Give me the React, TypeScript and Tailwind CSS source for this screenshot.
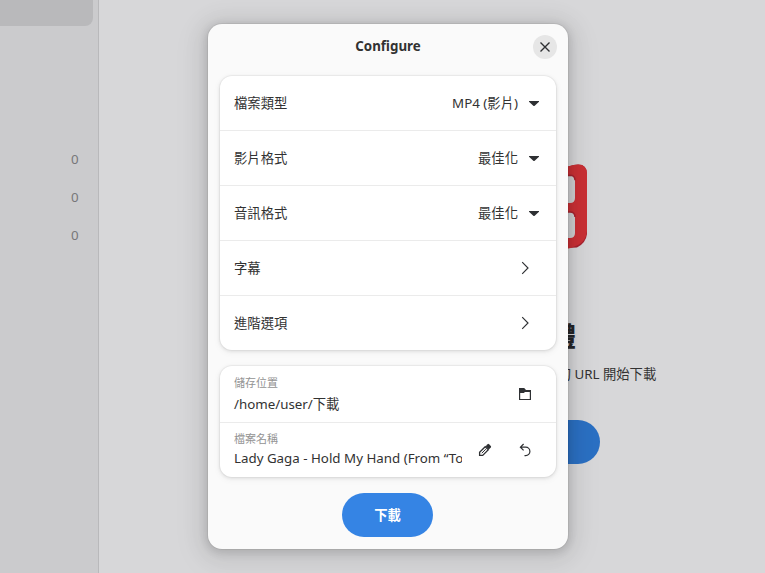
import React from "react";

function Caret() {
  return (
    <svg width="16" height="16" viewBox="0 0 16 16" className="mt-0.5 shrink-0" fill="#2e3033">
      <path d="M3 5h10v.800L8.700 9.700a1 1 0 0 1-1.400 0L3 5.800z" />
    </svg>
  );
}

function Chevron() {
  return (
    <svg width="16" height="16" viewBox="0 0 16 16" className="mr-[9px] shrink-0" fill="none" stroke="#2e3033" strokeWidth="1.150">
      <path d="M5.200 2.200 11 8l-5.800 5.800" />
    </svg>
  );
}

function OptionRow({ label, value }: { label: string; value?: string }) {
  return (
    <div className="flex h-[55px] items-center border-b border-[#ebebeb] px-3.5 last:h-[54px] last:border-b-0">
      <span className="flex-1 pt-0.5">{label}</span>
      {value ? (
        <div className="flex items-center gap-2">
          <span className="pt-0.5">{value}</span>
          <Caret />
        </div>
      ) : (
        <Chevron />
      )}
    </div>
  );
}

function Folder() {
  return (
    <svg width="16" height="16" viewBox="0 0 16 16" fill="#2e3033">
      <path fillRule="evenodd" d="M2 2h5.200l1.800 2h5v10H2V2zm6 4L6.800 7H3.200v5.900h9.600V6H8z" />
    </svg>
  );
}

function Pencil() {
  return (
    <svg width="16" height="16" viewBox="0 0 16 16" fill="none" stroke="#2e3033" strokeWidth="1.300">
      <path d="M2.600 13.400V10.300L8.200 4.700l3.100 3.100-5.600 5.600z" />
      <path d="m4.800 11.200 4-4" strokeWidth="1" />
      <path d="M8.600 4.200 10.600 2.200a1 1 0 0 1 1.400 0L13.800 4a1 1 0 0 1 0 1.400L11.800 7.400z" fill="#2e3033" stroke="none" />
    </svg>
  );
}

function Undo() {
  return (
    <svg width="16" height="16" viewBox="0 0 16 16" fill="none" stroke="#2e3033" strokeWidth="1.200">
      <path d="M6.600 2 3.400 5.200l3.200 3.200M3.500 5.200H8.700a4.200 4.200 0 0 1 0 8.400H7.500" />
    </svg>
  );
}

const card = "rounded-xl bg-white shadow-[0_0_0_1px_rgba(0,0,0,0.03),0_1px_3px_1px_rgba(0,0,0,0.07),0_2px_6px_2px_rgba(0,0,0,0.03)]";

function ConfigureDialog() {
  return (
    <section className="absolute top-6 left-[208px] h-[525px] w-[360px] rounded-[14px] bg-[#fafafa] px-3 shadow-[0_2px_8px_2px_rgba(0,0,0,0.13),0_3px_20px_10px_rgba(0,0,0,0.06),0_6px_32px_16px_rgba(0,0,0,0.025),0_0_0_1px_rgba(0,0,0,0.05)]">
      <header className="-mr-px grid h-[52px] grid-cols-[23px_1fr_24px] pt-[11px]">
        <span />
        <h1 className="text-center font-bold leading-[22px]">Configure</h1>
        <button className="flex size-6 items-center justify-center rounded-full bg-[#e6e6e6]">
          <svg width="16" height="16" viewBox="0 0 16 16" stroke="#2e3033" strokeWidth="1.350">
            <path d="m3.500 3.500 9 9m0-9-9 9" />
          </svg>
        </button>
      </header>
      <div className={card}>
        <OptionRow label="檔案類型" value="MP4 (影片)" />
        <OptionRow label="影片格式" value="最佳化" />
        <OptionRow label="音訊格式" value="最佳化" />
        <OptionRow label="字幕" />
        <OptionRow label="進階選項" />
      </div>
      <div className={`mt-4 ${card}`}>
        <div className="flex h-[57px] items-center border-b border-[#ebebeb] pr-[23px] pl-3.5">
          <div className="flex-1">
            <div className="pt-px text-[11px] leading-[18px] text-[#939393]">儲存位置</div>
            <div className="pt-px leading-[22px]">/home/user/下載</div>
          </div>
          <Folder />
        </div>
        <div className="flex h-[54px] items-center pr-[23px] pl-3.5">
          <div className="w-[228px] overflow-hidden pb-0.5 whitespace-nowrap">
            <div className="text-[11px] leading-[18px] text-[#939393]">檔案名稱</div>
            <div className="pb-px leading-[20px]">Lady Gaga - Hold My Hand (From “Top Gun: Maverick”)</div>
          </div>
          <div className="ml-auto flex gap-6">
            <Pencil />
            <Undo />
          </div>
        </div>
      </div>
      <button className="mt-4 ml-[122px] block h-11 w-[91px] rounded-full bg-[#3584e4] pt-0.5 font-bold text-white">下載</button>
    </section>
  );
}

export default function App() {
  return (
    <div className="relative flex h-[573px] w-[765px] overflow-hidden bg-[#d7d7d9] font-['Noto_Sans','Noto_Sans_CJK_TC',sans-serif] text-[13.333px] text-[#323232]">
      <aside className="w-[99px] shrink-0 border-r border-[#b9b9bb] bg-[#cbcbcd]">
        <div className="h-[26px] w-[93px] rounded-br-lg bg-[#b9b9bb]" />
        <div className="flex flex-col pt-[114px] pr-[19.500px] text-right text-[#777779]">
          <span className="h-[38px] leading-[38px]">0</span>
          <span className="h-[38px] leading-[38px]">0</span>
          <span className="h-[38px] leading-[38px]">0</span>
        </div>
      </aside>
      <main className="flex w-[848px] shrink-0 flex-col items-center pt-[158px]">
        <svg width="128" height="96" viewBox="0 0 128 96">
          <path d="M0 22 109 8.500Q128 2 128 16v60q-1 9-10 13.500L0 96z" fill="#a72430" />
          <path d="M0 22 109 8.500Q128 2 128 16v57q-1 10-9 14-6 3-12 4L0 94z" fill="#cb3035" />
          <path d="M94 20q0-2 4-2l13-.800q5 0 5 5V40q0 5-5 5H94zM94 57q0-3 4-3h13q5 0 5 5v16q0 5-5 5H94z" fill="#d0d0d2" />
          <path d="M94 18.500 111 17.200q5 0 5 5M94 54h17q5 0 5 5" fill="none" stroke="#a72430" strokeWidth="1.500" />
        </svg>
        <h2 className="mt-[62px] pl-px text-[26px] leading-[40px] font-black text-[#252528]">新增媒體</h2>
        <p className="mt-[7px] pl-2 leading-[22px] whitespace-nowrap">新增影片、音樂或播放清單的 URL 開始下載</p>
        <button className="mt-[35px] h-11 w-[154px] rounded-full bg-[#2b70c3] font-bold text-white">新增下載</button>
      </main>
      <ConfigureDialog />
    </div>
  );
}
